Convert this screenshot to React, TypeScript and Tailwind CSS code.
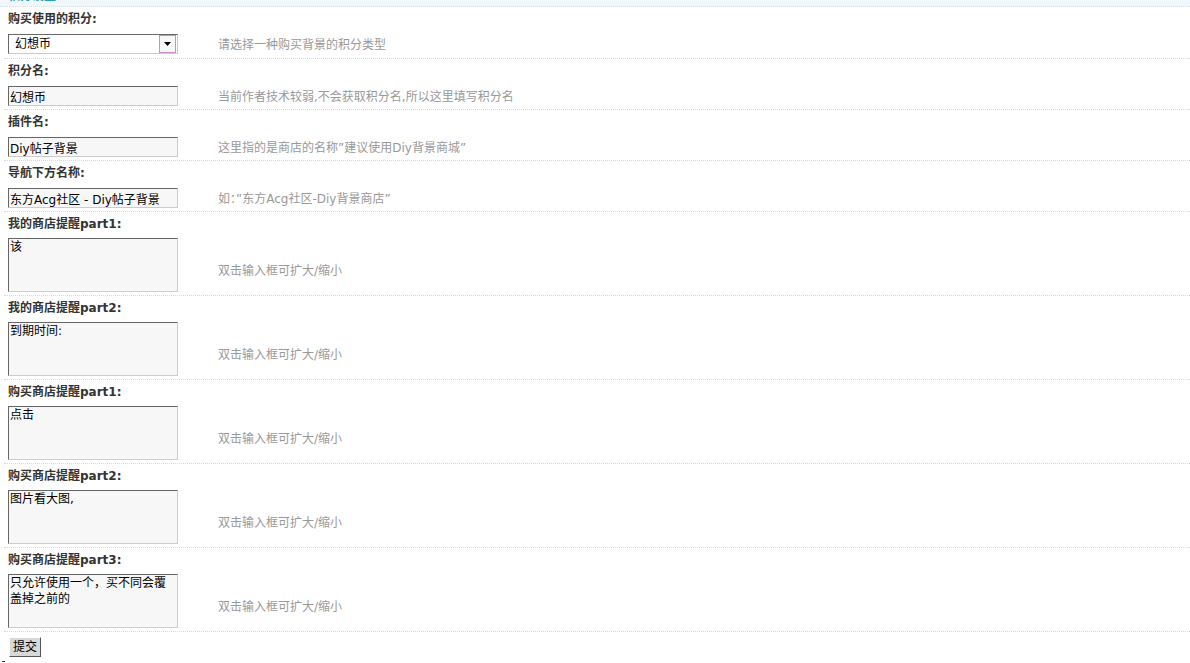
import React from "react";

const font = { fontFamily: '"DejaVu Sans", "Noto Sans CJK SC", sans-serif' } as const;

type Row =
  | { kind: "select"; label: string; value: string; hint: string }
  | { kind: "input"; label: string; value: string; hint: string }
  | { kind: "textarea"; label: string; value: string; hint: string };

const rows: Row[] = [
  { kind: "select", label: "购买使用的积分:", value: "幻想币", hint: "请选择一种购买背景的积分类型" },
  { kind: "input", label: "积分名:", value: "幻想币", hint: "当前作者技术较弱,不会获取积分名,所以这里填写积分名" },
  { kind: "input", label: "插件名:", value: "Diy帖子背景", hint: "这里指的是商店的名称”建议使用Diy背景商城”" },
  { kind: "input", label: "导航下方名称:", value: "东方Acg社区 - Diy帖子背景", hint: "如：”东方Acg社区-Diy背景商店”" },
  { kind: "textarea", label: "我的商店提醒part1:", value: "该", hint: "双击输入框可扩大/缩小" },
  { kind: "textarea", label: "我的商店提醒part2:", value: "到期时间:", hint: "双击输入框可扩大/缩小" },
  { kind: "textarea", label: "购买商店提醒part1:", value: "点击", hint: "双击输入框可扩大/缩小" },
  { kind: "textarea", label: "购买商店提醒part2:", value: "图片看大图,", hint: "双击输入框可扩大/缩小" },
  { kind: "textarea", label: "购买商店提醒part3:", value: "只允许使用一个，买不同会覆盖掉之前的", hint: "双击输入框可扩大/缩小" },
];

function Field({ row }: { row: Row }) {
  if (row.kind === "select") {
    return (
      <div className="flex h-[20px] w-[170px] items-center border border-t-[#666] border-l-[#666] border-r-[#ccc] border-b-[#ccc] bg-white">
        <span className="flex-1 pl-[6px] text-[12px] leading-none text-black">{row.value}</span>
        <span className="mr-[1px] flex h-[18px] w-[17px] items-center justify-center border border-[#c98fcf] bg-[#f7f7f7]">
          <svg width="7" height="4" viewBox="0 0 7 4">
            <path d="M0 0H7L3.5 4Z" fill="#000" />
          </svg>
        </span>
      </div>
    );
  }
  if (row.kind === "input") {
    return (
      <input
        readOnly
        value={row.value}
        className="block h-[20px] w-[170px] border border-t-[#666] border-l-[#666] border-r-[#ccc] border-b-[#ccc] bg-[#f7f7f7] px-[1px] text-[12px] text-black outline-none"
        style={font}
      />
    );
  }
  return (
    <textarea
      readOnly
      value={row.value}
      className="block h-[54px] w-[170px] resize-none overflow-hidden border border-t-[#666] border-l-[#666] border-r-[#ccc] border-b-[#ccc] bg-[#f7f7f7] px-[1px] py-0 text-[12px] leading-[16px] text-black outline-none"
      style={font}
    />
  );
}

export default function App() {
  return (
    <div className="relative min-h-[663px] w-[1190px] bg-white text-[12px]" style={font}>
      <div className="h-[7px] overflow-hidden border-b border-dotted border-[#cfe1ee] bg-[#f1f8fc]">
        <div className="-mt-[11px] pl-[8px] text-[12px] font-bold leading-[14px] text-[#2aa0b7]">积分设置</div>
      </div>
      <div className="pl-[4px]">
        {rows.map((row, i) => {
          const isArea = row.kind === "textarea";
          return (
            <div key={i} className="border-b border-dotted border-[#d8d8d8]">
              <div className="h-[23px] pl-[4px] pt-[2px] font-bold leading-[21px] text-[#333]">{row.label}</div>
              <div className={`flex items-center ${isArea ? "pt-[3px] pb-[3px]" : i === 0 ? "pt-[4px] pb-[4px]" : "pt-[4px] pb-[3px]"}`}>
                <div className="w-[210px] shrink-0 pl-[4px]">
                  <Field row={row} />
                </div>
                <div className={`pl-[4px] text-[#999] ${isArea ? "pt-[11px]" : "pt-[1px]"}`}>{row.hint}</div>
              </div>
            </div>
          );
        })}
        <div className="pl-[5px] pt-[5px]">
          <button className="h-[20px] w-[32px] border border-t-[#fff] border-l-[#fff] border-r-[#555] border-b-[#555] bg-[#d8d8d8] p-0 text-[12px] leading-none text-black" style={font}>
            提交
          </button>
        </div>
      </div>
      <div className="absolute left-[2px] top-[661px] h-[1px] w-[3px] bg-[#333]" />
    </div>
  );
}
